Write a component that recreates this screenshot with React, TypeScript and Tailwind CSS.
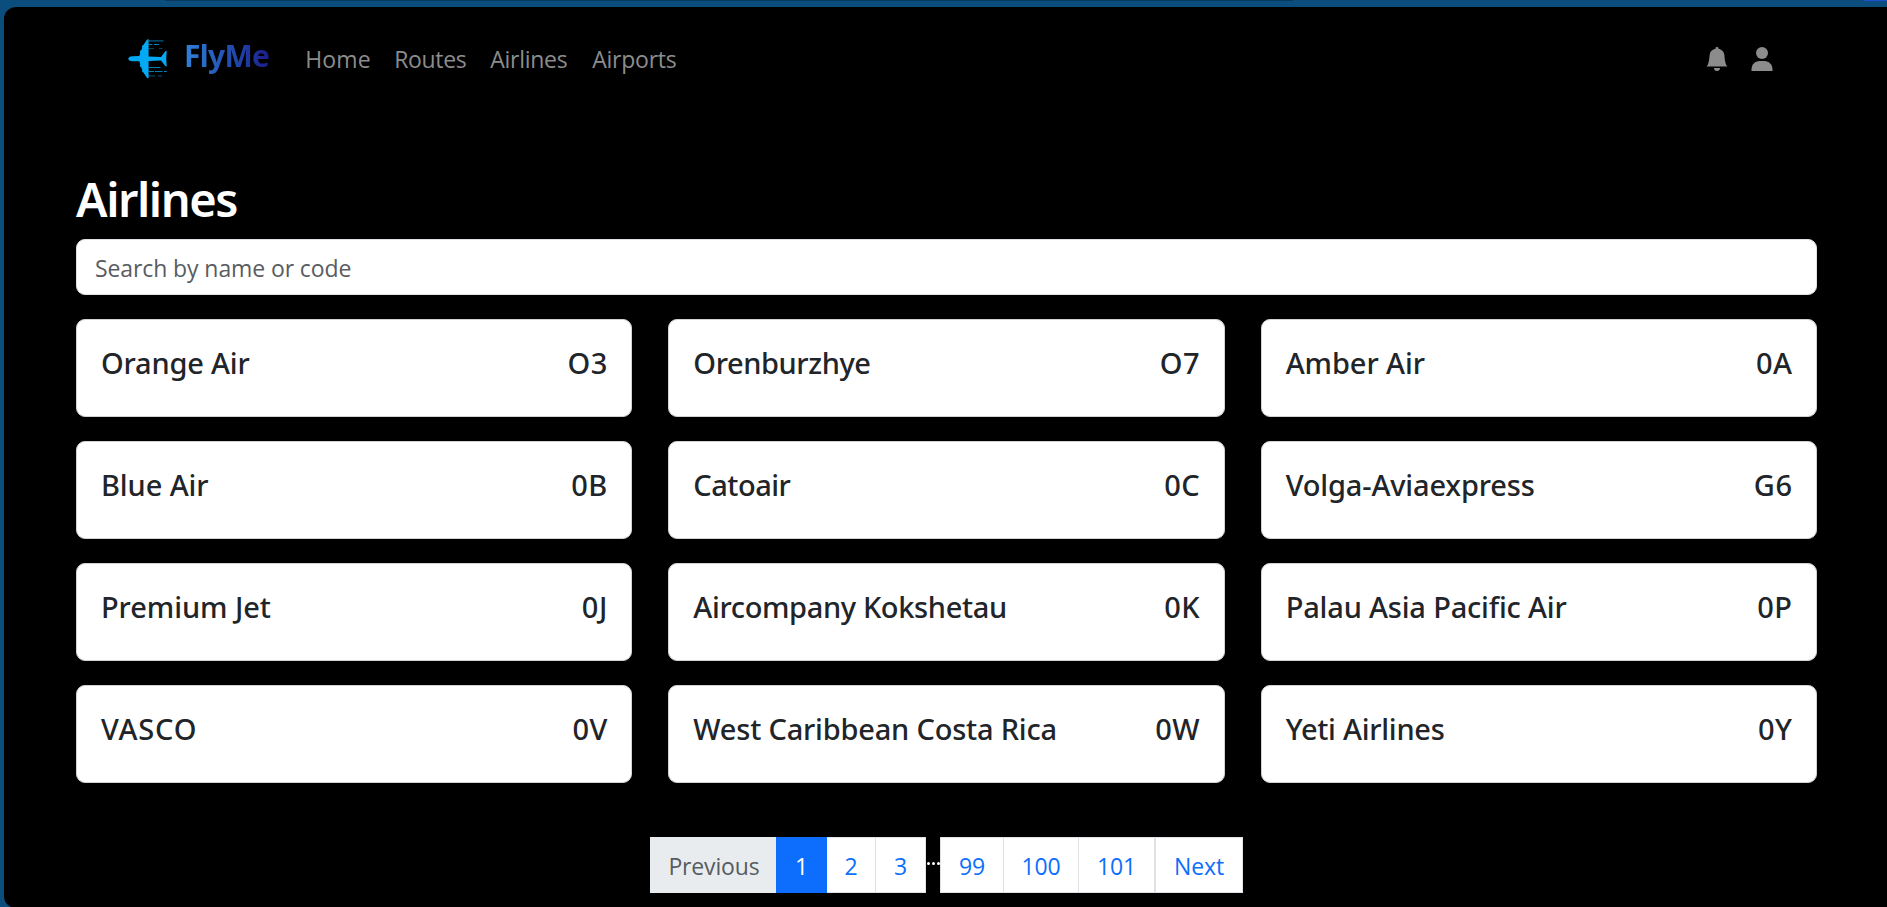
import { useState } from "react";

type Airline = { name: string; code: string; nameClass: string };

const airlines: Airline[] = [
  { name: "Orange Air", code: "O3", nameClass: "tracking-[-0.2px]" },
  { name: "Orenburzhye", code: "O7", nameClass: "tracking-[-0.4px]" },
  { name: "Amber Air", code: "0A", nameClass: "tracking-[-0.08px]" },
  { name: "Blue Air", code: "0B", nameClass: "tracking-[-0.1px]" },
  { name: "Catoair", code: "0C", nameClass: "tracking-[-0.5px]" },
  { name: "Volga-Aviaexpress", code: "G6", nameClass: "tracking-[-0.16px]" },
  { name: "Premium Jet", code: "0J", nameClass: "tracking-[-0.07px]" },
  { name: "Aircompany Kokshetau", code: "0K", nameClass: "tracking-[-0.36px]" },
  { name: "Palau Asia Pacific Air", code: "0P", nameClass: "tracking-[-0.18px]" },
  { name: "VASCO", code: "0V", nameClass: "tracking-[0.8px]" },
  { name: "West Caribbean Costa Rica", code: "0W", nameClass: "tracking-[-0.2px]" },
  { name: "Yeti Airlines", code: "0Y", nameClass: "tracking-[-0.26px]" },
];

const links = [
  { label: "Home", className: "w-[89px] tracking-[0.1px]" },
  { label: "Routes", className: "w-[96px] tracking-[-0.35px]" },
  { label: "Airlines", className: "w-[102px] tracking-[-0.27px]" },
  { label: "Airports", className: "w-[101px] tracking-[-0.25px]" },
];

function Logo() {
  return (
    <svg width="40" height="40" viewBox="0 0 40 40" className="shrink-0" fill="#03a9f4">
      <path d="M.3 19.700C.3 18.200 2 17.300 4.500 17.200L11.300 17.100L12.300 13.900L11.800 13.200L12 11.800L13.200 11.200L14.300 8.500L13.900 7.700L14.300 6.600L15.400 6L18.700 .9L19.600 .2H20.600V17.500L33 18L37.300 12.300L38.700 11.700L38.200 19.700L38.700 27.700L37.300 27.100L33 21.400L20.600 21.900V39.200H19.600L18.700 38.500L15.400 33.400L14.300 32.800L13.900 31.700L14.300 30.900L13.200 28.200L12 27.600L11.800 26.200L12.300 25.500L11.300 22.300L4.500 22.200C2 22.100 .3 21.200 .3 19.700Z" />
      <path opacity=".4" d="M20.600 1H35.500V2.700H20.600ZM20.600 9H26V10H20.600ZM31 9H34.500V10H31ZM20.600 36.200H27V37.600H20.600ZM30 36.200H34V37.600H30Z" />
      <path opacity=".75" d="M20.600 5H24.500V6H20.600ZM26 5H31V6H26ZM20.600 28H32.500V29H20.600ZM20.600 32H26V33H20.600ZM27 32H34.500V33H27ZM36 32H38.800V33H36Z" />
    </svg>
  );
}

function Navbar() {
  return (
    <nav className="flex h-[104px] items-center pr-[113px] pl-[124px]">
      <a href="#" className="flex items-center">
        <Logo />
        <span className="ml-[16px] bg-linear-to-r from-[#3281d8] to-[#1c1c8c] bg-clip-text pb-[8px] text-[30px] leading-[45px] font-bold tracking-[-0.7px] text-transparent">
          FlyMe
        </span>
      </a>
      <div className="ml-[36px] flex font-['Open_Sans',sans-serif] text-[23px] leading-9 text-[#8c8c8c]">
        {links.map((link) => (
          <a key={link.label} href="#" className={link.className}>
            {link.label}
          </a>
        ))}
      </div>
      <div className="ml-auto flex gap-[21px] text-[#8c8c8c]">
        <svg width="24" height="24" viewBox="0 0 16 16" fill="currentColor">
          <path d="M8 16a2 2 0 0 0 2-2H6a2 2 0 0 0 2 2m.995-14.901a1 1 0 1 0-1.990 0A5 5 0 0 0 3 6c0 1.098-.5 6-2 7h14c-1.500-1-2-5.902-2-7 0-2.420-1.720-4.440-4.005-4.901" />
        </svg>
        <svg width="24" height="24" viewBox="0 0 24 24" fill="currentColor">
          <circle cx="12" cy="6" r="6" />
          <path d="M1.500 24v-1.500C1.500 17.500 5 14 9.500 14h5c4.500 0 8 3.500 8 8.500V24z" />
        </svg>
      </div>
    </nav>
  );
}

function Pagination() {
  const cell = "flex items-center justify-center border-y border-[#dee2e6] bg-white pt-[2px] text-[#0d6efd]";
  return (
    <div className="ml-[574px] flex h-[56px] font-['Open_Sans',sans-serif] text-[23px] tracking-[-0.15px]">
      <button className="w-[126px] bg-[#e9ecef] pt-[2px] pl-[2px] text-[#575c61]">Previous</button>
      <button className="w-[51px] bg-[#0d6efd] pt-[2px] text-white">1</button>
      <button className={`${cell} w-[49px] border-r`}>2</button>
      <button className={`${cell} w-[50px] border-r`}>3</button>
      <span className="flex w-[14px] items-center justify-center gap-[2px] pb-[4px]">
        <i className="size-[3px] rounded-full bg-white" />
        <i className="size-[3px] rounded-full bg-white" />
        <i className="size-[3px] rounded-full bg-white" />
      </span>
      <button className={`${cell} w-[64px] border-x`}>99</button>
      <button className={`${cell} w-[75px] border-r`}>100</button>
      <button className={`${cell} w-[77px] border-r-2`}>101</button>
      <button className={`${cell} w-[87px] border-r`}>Next</button>
    </div>
  );
}

export default function App() {
  const [query, setQuery] = useState("");
  return (
    <div className="h-[907px] overflow-hidden bg-[#0b4d7d] pl-[4px] font-['Noto_Sans',sans-serif]">
      <div className="flex h-[7px] items-start justify-between pl-[161px]">
        <span className="h-px w-[1128px] bg-[#093a5e]" />
        <span className="h-px w-[23px] bg-[#1a50d0]" />
      </div>
      <div className="h-[901px] rounded-l-[12px] bg-black">
        <Navbar />
        <main className="pr-[70px] pl-[72px]">
          <h1 className="h-[128px] pt-[59px] text-[47px] leading-[58px] font-semibold tracking-[-1.45px] text-white">Airlines</h1>
          <input
            value={query}
            onChange={(e) => setQuery(e.target.value)}
            placeholder="Search by name or code"
            className="block h-[56px] w-full rounded-[9px] border border-[#dee2e6] bg-white px-[18px] pt-px font-['Open_Sans',sans-serif] text-[23px] tracking-[-0.1px] text-[#212529] placeholder:text-[#595c5f]"
          />
          <div className="mt-[24px] grid grid-cols-3 gap-x-[36px] gap-y-[24px]">
            {airlines.map((a) => (
              <div
                key={a.code}
                className="flex h-[98px] justify-between rounded-[9px] border border-[#d2d2d2] bg-white px-[24px] pt-[25px] text-[29px] leading-[36px] font-[550] text-[#212529]"
              >
                <span className={a.nameClass}>{a.name}</span>
                <span className="-mr-[0.5px] tracking-[0.5px]">{a.code}</span>
              </div>
            ))}
          </div>
          <div className="mt-[54px]">
            <Pagination />
          </div>
        </main>
      </div>
    </div>
  );
}
